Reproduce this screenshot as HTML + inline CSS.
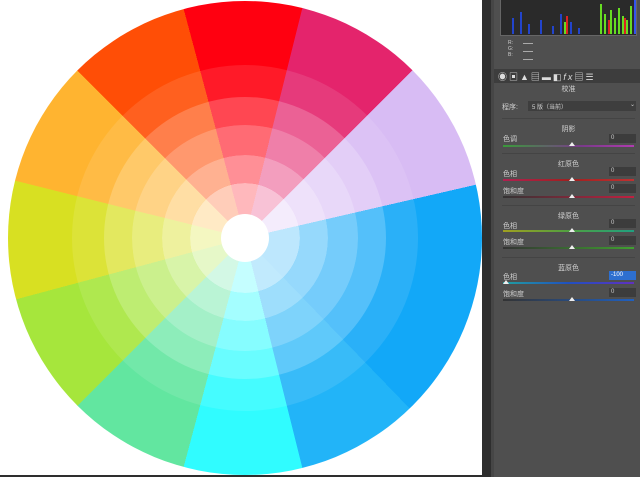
<!DOCTYPE html><html><head><style>
*{margin:0;padding:0;box-sizing:border-box}
body{width:640px;height:477px;overflow:hidden;background:#2e2e2e;font-family:"Liberation Sans","Noto Sans CJK SC",sans-serif;position:relative}
#canvas{position:absolute;left:0;top:0;width:482px;height:475px;background:#fff;overflow:hidden}
.r{position:absolute;border-radius:50%;background:conic-gradient(from -15deg,#ff0010 0 29deg,#e4246c 29deg 60deg,#d8bcf4 60deg 92deg,#12a8f8 92deg 151deg,#22b4f8 151deg 181deg,#30fcff 181deg 210deg,#62e6a0 210deg 240deg,#a6e63c 240deg 270deg,#d8e022 270deg 299deg,#ffb430 299deg 330deg,#ff4e06 330deg 360deg)}
.r::after{content:"";position:absolute;inset:0;border-radius:50%;background:#fff;opacity:var(--o)}
#panel{position:absolute;left:491px;top:0;width:149px;height:477px;background:#4f4f4f;border-left:3px solid #464646}
.t{position:absolute;font-size:7px;color:#d0d0d0;white-space:nowrap}
.c{width:149px;text-align:center;left:0}
.box{position:absolute;left:115px;width:27px;height:9px;background:#3c3c3c;font-size:6px;color:#ccc;padding-left:2px;line-height:9px}
.sl{position:absolute;left:9px;width:131px;height:2px}
.th{position:absolute;width:0;height:0;border-left:3px solid transparent;border-right:3px solid transparent;border-bottom:4px solid #eee}
.sep{position:absolute;left:8px;width:133px;height:1px;background:#444}
</style></head><body>
<div id="canvas">
<div class="r" style="left:8px;top:1px;width:474px;height:474px;--o:0"></div>
<div class="r" style="left:72px;top:65px;width:346px;height:346px;--o:.1"></div>
<div class="r" style="left:104px;top:97px;width:282px;height:282px;--o:.28"></div>
<div class="r" style="left:132px;top:125px;width:226px;height:226px;--o:.42"></div>
<div class="r" style="left:162px;top:155px;width:166px;height:166px;--o:.56"></div>
<div class="r" style="left:190px;top:183px;width:110px;height:110px;--o:.72"></div>
<div style="position:absolute;left:221px;top:214px;width:48px;height:48px;border-radius:50%;background:#fff"></div>
</div>
<div id="panel">
<div style="position:absolute;left:6px;top:0;width:137px;height:36px;background:#2a2a2a;border:1px solid #666;border-top:none;overflow:hidden">
<svg width="137" height="36"><g stroke-width="2">
<path d="M12 34V18M20 34V12M28 34V24M40 34V20M52 34V26M60 34V14M70 34V22M78 34V28" stroke="#2244cc"/>
<path d="M64 34V22M100 34V4M104 34V14M110 34V10M114 34V18M118 34V8M122 34V16M126 34V20M130 34V6" stroke="#66dd22"/>
<path d="M66 34V16M108 34V20M124 34V18" stroke="#dd2222"/>
<path d="M134 34V0" stroke="#3355ee"/></g></svg></div>
<div class="t" style="left:14px;top:40px;font-size:5px">R:<br>G:<br>B:</div>
<div style="position:absolute;left:29px;top:43px;width:10px;height:1px;background:#aaa;box-shadow:0 8px #aaa,0 16px #aaa"></div>
<div style="position:absolute;left:0;top:69px;width:146px;height:14px;background:#3d3d3d"></div>
<div class="t" style="left:4px;top:70px;font-size:9px;color:#ddd;letter-spacing:2px">◉▣▲▤▬◧<i>fx</i>▤☰</div>
<div class="t c" style="top:84px">校准</div>
<div class="t" style="left:8px;top:102px">程序:</div>
<div style="position:absolute;left:34px;top:101px;width:108px;height:10px;background:#3e3e3e"></div>
<div class="t" style="left:38px;top:102px;font-size:6px">5 版（当前）</div>
<div class="t" style="left:136px;top:101px;font-size:6px">⌄</div>
<div class="sep" style="top:118px"></div>
<div class="t c" style="top:124px">阴影</div>
<div class="t" style="left:9px;top:134px">色调</div><div class="box" style="top:134px">0</div>
<div class="sl" style="top:145px;background:linear-gradient(90deg,#3a9a3a,#7a3a8a 60%,#b03ab0)"></div><div class="th" style="left:75px;top:142px"></div>
<div class="sep" style="top:153px"></div>
<div class="t c" style="top:159px">红原色</div>
<div class="t" style="left:9px;top:169px">色相</div><div class="box" style="top:167px">0</div>
<div class="sl" style="top:179px;background:linear-gradient(90deg,#b02050,#a02020,#c03030)"></div><div class="th" style="left:75px;top:177px"></div>
<div class="t" style="left:9px;top:186px">饱和度</div><div class="box" style="top:184px">0</div>
<div class="sl" style="top:196px;background:linear-gradient(90deg,#333,#c02040)"></div><div class="th" style="left:75px;top:194px"></div>
<div class="sep" style="top:205px"></div>
<div class="t c" style="top:211px">绿原色</div>
<div class="t" style="left:9px;top:221px">色相</div><div class="box" style="top:219px">0</div>
<div class="sl" style="top:230px;background:linear-gradient(90deg,#a0a020,#50a040,#20a080)"></div><div class="th" style="left:75px;top:228px"></div>
<div class="t" style="left:9px;top:237px">饱和度</div><div class="box" style="top:236px">0</div>
<div class="sl" style="top:247px;background:linear-gradient(90deg,#333,#40a030)"></div><div class="th" style="left:75px;top:245px"></div>
<div class="sep" style="top:257px"></div>
<div class="t c" style="top:263px">蓝原色</div>
<div class="t" style="left:9px;top:272px">色相</div><div class="box" style="top:271px;background:#2d6fd0;color:#fff">-100</div>
<div class="sl" style="top:282px;background:linear-gradient(90deg,#20a0a0,#2050c0,#6030c0)"></div><div class="th" style="left:9px;top:280px"></div>
<div class="t" style="left:9px;top:289px">饱和度</div><div class="box" style="top:288px">0</div>
<div class="sl" style="top:299px;background:linear-gradient(90deg,#333,#2060c0)"></div><div class="th" style="left:75px;top:297px"></div>
</div>
</body></html>
